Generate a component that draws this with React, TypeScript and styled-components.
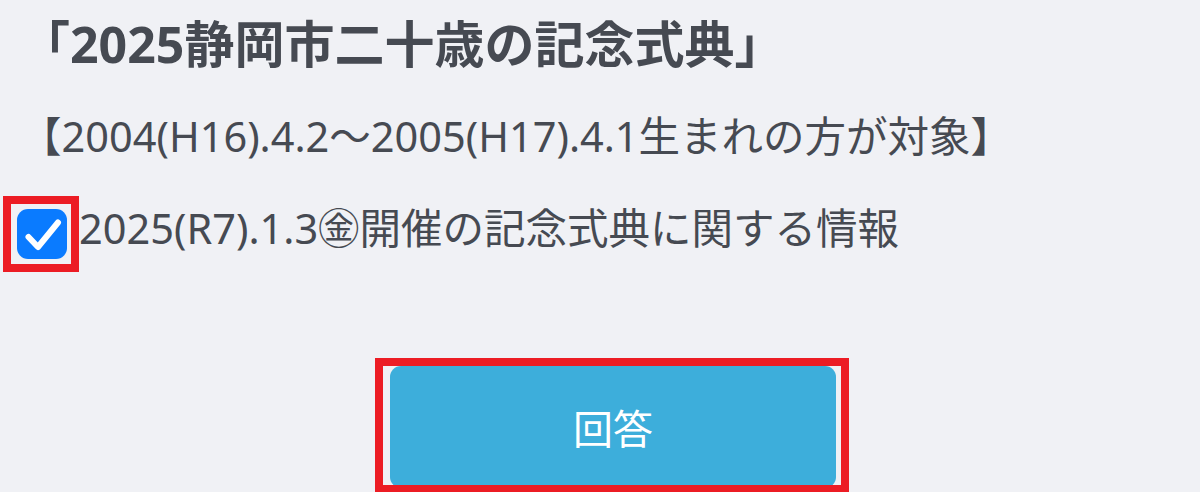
import React from 'react';
import styled, { createGlobalStyle } from 'styled-components';

const GlobalStyle = createGlobalStyle`
  html, body {
    margin: 0;
    padding: 0;
    background: #f0f1f5;
    overflow: hidden;
  }
  body {
    font-family: "Noto Sans", "Noto Sans CJK JP", sans-serif;
    color: #464a52;
  }
`;

const Page = styled.div`
  width: 1200px;
  height: 492px;
  box-sizing: border-box;
  padding: 14px 20px 0 20px;
  display: flex;
  flex-direction: column;
`;

const Title = styled.h1`
  margin: 0;
  font-size: 50px;
  font-weight: 700;
  line-height: 60px;
  white-space: nowrap;
`;

const Target = styled.p`
  margin: 32px 0 0 0;
  font-size: 41.5px;
  font-weight: 400;
  line-height: 60px;
  white-space: nowrap;
`;

const OptionRow = styled.label`
  margin-top: 32px;
  display: flex;
  align-items: flex-start;
  gap: 12px;
`;

const Highlight = styled.span<{ $inset: string }>`
  position: absolute;
  inset: ${({ $inset }) => $inset};
  border: 8px solid #ec1c24;
  pointer-events: none;
`;

const CheckWrap = styled.span`
  position: relative;
  flex: none;
  margin: 11px 0 0 -3px;
  display: flex;
`;

const CheckBox = styled.span<{ $checked: boolean }>`
  width: 50px;
  height: 50px;
  border-radius: 11px;
  background: ${({ $checked }) => ($checked ? '#0a7bff' : '#ffffff')};
  display: flex;
  align-items: center;
  justify-content: center;
`;

const OptionText = styled.span`
  font-size: 41.5px;
  line-height: 60px;
  white-space: nowrap;
`;

const Footer = styled.div`
  margin-top: 107px;
  display: flex;
  justify-content: center;
  padding-left: 26px;
`;

const SubmitWrap = styled.div`
  position: relative;
  display: flex;
`;

const SubmitButton = styled.button`
  width: 446px;
  height: 122px;
  border: none;
  border-radius: 11px;
  background: #3daedb;
  color: #ffffff;
  font-family: "Noto Sans CJK JP", sans-serif;
  font-size: 40px;
  font-weight: 400;
  cursor: pointer;
`;

const App: React.FC = () => {
  const checked = true;

  return (
    <>
      <GlobalStyle />
      <Page>
        <Title>「2025静岡市二十歳の記念式典」</Title>
        <Target>【2004(H16).4.2～2005(H17).4.1生まれの方が対象】</Target>
        <OptionRow>
          <CheckWrap>
            <CheckBox $checked={checked}>
              <svg width="50" height="50" viewBox="0 0 50 50">
                <path
                  d="M11.5 28 L21 38 L41 13.5"
                  fill="none"
                  stroke="#ffffff"
                  strokeWidth="6"
                  strokeLinecap="round"
                  strokeLinejoin="round"
                />
              </svg>
            </CheckBox>
            <Highlight $inset="-13px -12px -13px -14px" />
          </CheckWrap>
          <OptionText>2025(R7).1.3㊎開催の記念式典に関する情報</OptionText>
        </OptionRow>
        <Footer>
          <SubmitWrap>
            <SubmitButton>回答</SubmitButton>
            <Highlight $inset="-8px -13px -5px -15px" />
          </SubmitWrap>
        </Footer>
      </Page>
    </>
  );
};

export default App;
